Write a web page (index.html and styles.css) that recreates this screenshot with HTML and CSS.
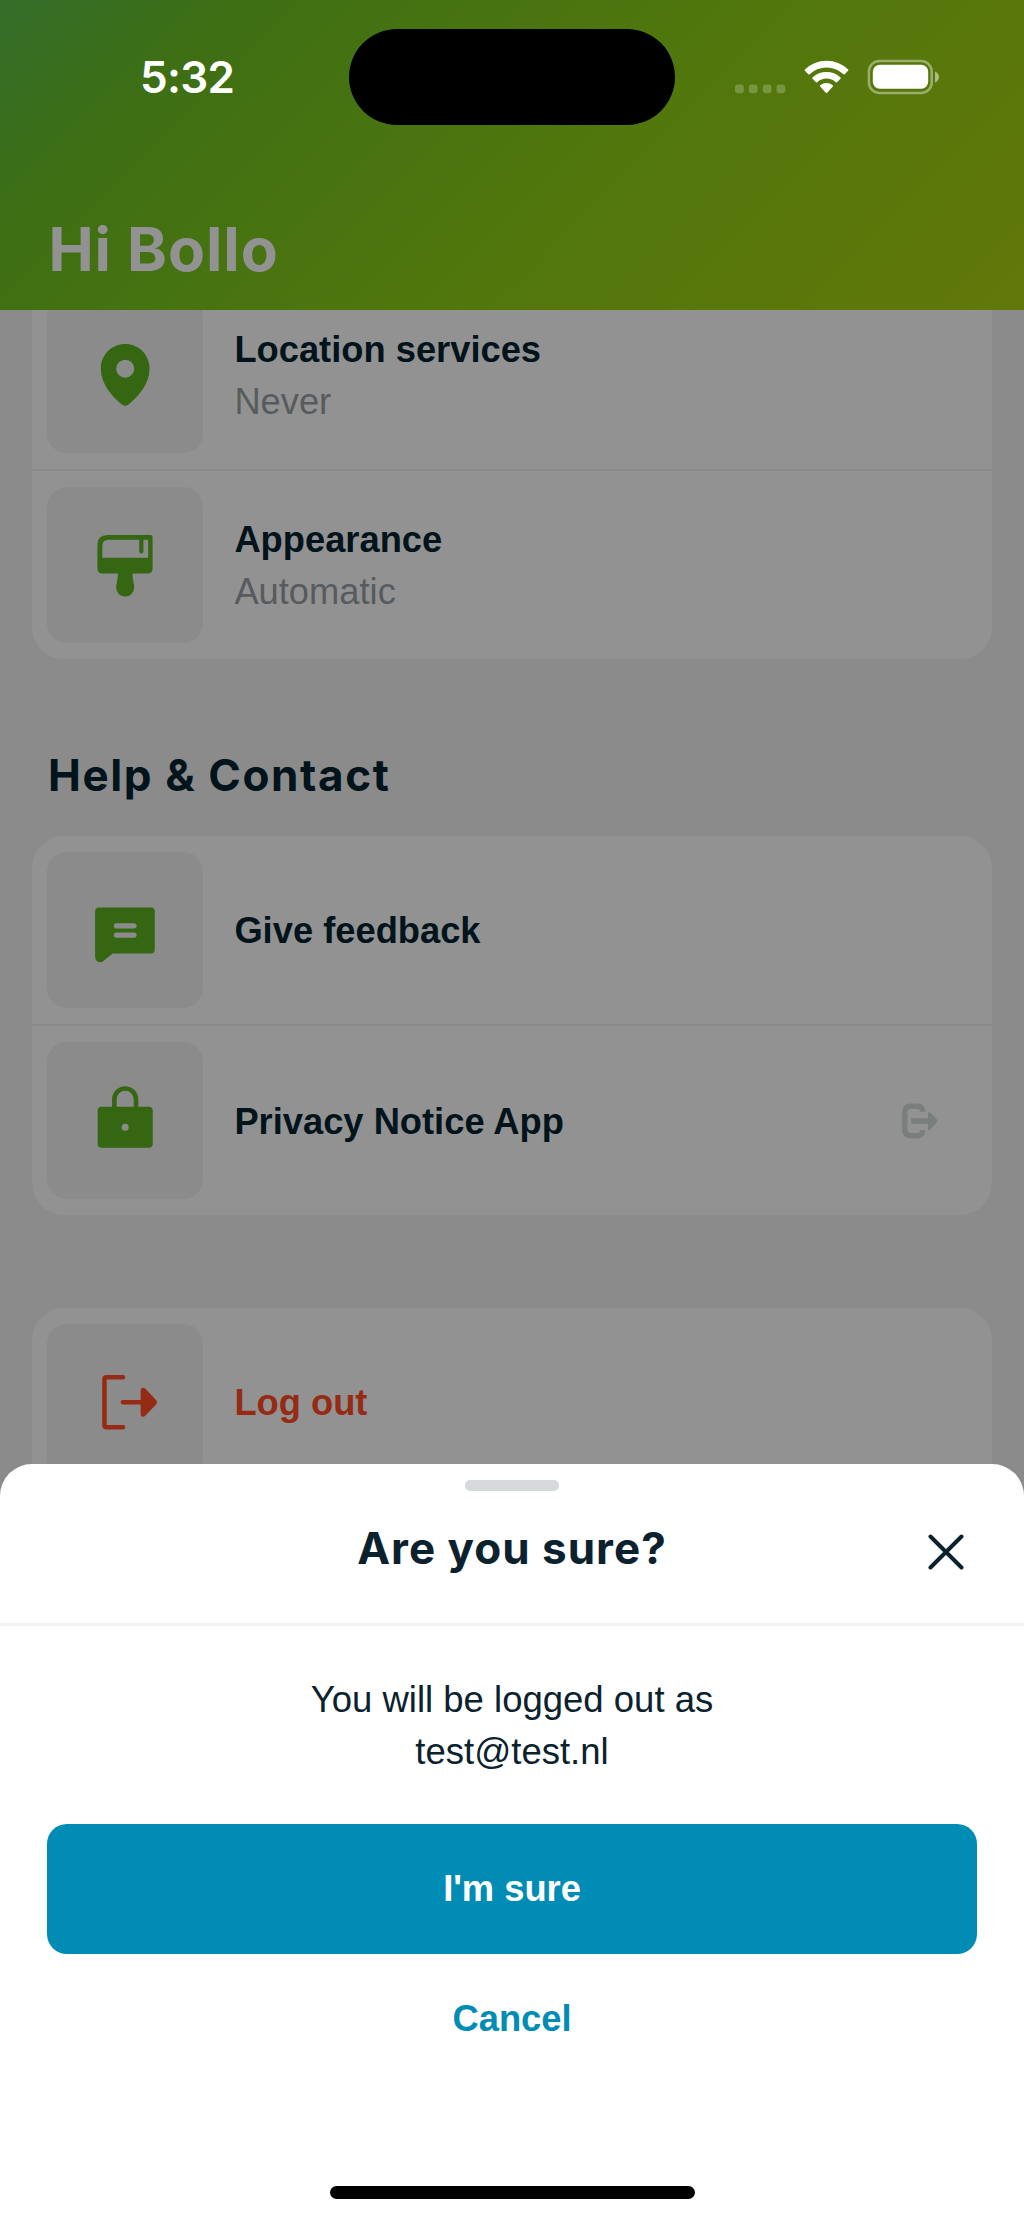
FILE: index.html
```html
<!DOCTYPE html>
<html lang="en">
<head>
<meta charset="utf-8">
<title>Profile</title>
<link rel="stylesheet" href="styles.css">
</head>
<body>
<div class="screen">
  <header class="header">
    <div class="status">
      <span class="time">5:32</span>
      <svg class="status-icons" viewBox="735 58 206 36" fill="#fff">
        <g opacity=".22">
          <rect x="735" y="83.5" width="8.8" height="8.8" rx="3"/>
          <rect x="748.8" y="83.5" width="8.8" height="8.8" rx="3"/>
          <rect x="762.7" y="83.5" width="8.8" height="8.8" rx="3"/>
          <rect x="776.5" y="83.5" width="8.8" height="8.8" rx="3"/>
        </g>
        <path d="M804.9 68.6a31 31 0 0 1 43.2 0q.5.6 0 1.200l-3.400 3.500q-.7.6-1.300 0a24.600 24.600 0 0 0-33.800 0q-.6.6-1.300 0l-3.400-3.500q-.5-.6 0-1.200z"/>
        <path d="M812.500 76.500a20.300 20.300 0 0 1 28 0q.6.6 0 1.200l-3.500 3.500q-.6.500-1.200 0a13.800 13.800 0 0 0-18.600 0q-.6.500-1.200 0l-3.500-3.500q-.6-.6 0-1.200z"/>
        <path d="M820.200 84.300a9.800 9.800 0 0 1 12.600 0q.7.600 0 1.300l-5.600 6.100q-.7.700-1.400 0l-5.600-6.100q-.7-.7 0-1.300z"/>
        <rect x="868.900" y="60" width="62.800" height="31.900" rx="10.500" fill="none" stroke="#fff" stroke-opacity=".4" stroke-width="2.500"/>
        <rect x="872.800" y="63.800" width="55.400" height="24" rx="7"/>
        <path opacity=".5" d="M935 70.500q4 2 4 5.500t-4 5.500z"/>
      </svg>
      <div class="island"></div>
    </div>
    <h1 class="greeting">Hi Bollo</h1>
  </header>

  <main class="content">
    <section class="card">
      <div class="row">
        <div class="tile">
          <svg viewBox="0 0 156 156"><path fill-rule="evenodd" d="M78 47C64.500 47 53.700 57.600 53.700 71.500C53.700 86 64 98.500 75 107.600Q78 109.600 81 107.600C92 98.500 102.300 86 102.300 71.500C102.300 57.600 91.500 47 78 47ZM78 62.500a9 9 0 1 1 0 18a9 9 0 0 1 0-18z"/></svg>
        </div>
        <div class="text"><span class="label">Location services</span><span class="value">Never</span></div>
      </div>
      <div class="row">
        <div class="tile">
          <svg viewBox="0 0 156 156"><path fill-rule="evenodd" d="M60.300 48H103.300Q105.300 48 105.300 50V81.300Q105.300 86.300 100.300 86.300H85.200Q85.300 91 86.500 96Q87 98 87 100.300A9 9 0 0 1 69 100.300Q69 98 69.500 96Q70.700 91 70.800 86.300H55.300Q50.300 86.300 50.300 81.300V58Q50.300 48 60.300 48ZM61.300 52.700Q55.200 52.700 55.200 59V70.600H100.900V52.700H96.200V64.300a2.100 2.100 0 0 1-4.200 0V52.700Z"/></svg>
        </div>
        <div class="text"><span class="label">Appearance</span><span class="value">Automatic</span></div>
      </div>
    </section>

    <h2 class="section-title">Help &amp; Contact</h2>
    <section class="card">
      <div class="row">
        <div class="tile">
          <svg viewBox="0 0 156 156"><path fill-rule="evenodd" d="M52 55.300H103.500Q107.500 55.300 107.500 59.300V97.300Q107.500 101.300 103.500 101.300H65.500L56 109Q53.500 110.800 50.500 109.300Q48 108 48 105V59.300Q48 55.300 52 55.300ZM69.200 71a2.600 2.600 0 0 0 0 5.200H86.800a2.600 2.600 0 0 0 0-5.200ZM69.200 80.300a2.600 2.600 0 0 0 0 5.200H86.800a2.600 2.600 0 0 0 0-5.200Z"/></svg>
        </div>
        <div class="text"><span class="label">Give feedback</span></div>
      </div>
      <div class="row">
        <div class="tile">
          <svg viewBox="0 0 156 156"><path d="M67.200 66V57.200a10.800 10.800 0 0 1 21.600 0V66" fill="none" stroke="currentColor" stroke-width="4.600"/><path fill-rule="evenodd" d="M54.600 64.500H101.400Q105.500 64.500 105.500 68.600V101.400Q105.500 105.500 101.400 105.500H54.600Q50.500 105.500 50.500 101.400V68.600Q50.500 64.500 54.600 64.500ZM78 81.500a3.500 3.500 0 1 0 0 7a3.500 3.500 0 0 0 0-7z"/></svg>
        </div>
        <div class="text"><span class="label">Privacy Notice App</span></div>
        <svg class="external" viewBox="902 1103 36 36"><path d="M923 1111.800Q922.500 1106.300 917 1106.300H910.800Q904.800 1106.300 904.800 1112.300V1129.800Q904.800 1135.700 910.800 1135.700H917Q922.500 1135.700 923 1130.200M911.200 1121H930" fill="none" stroke="currentColor" stroke-width="5.400"/><path d="M928 1113.500Q928 1111 930.300 1112.500L936.600 1119.200Q938 1121 936.600 1122.800L930.300 1129.500Q928 1131 928 1128.500Z" fill="currentColor"/></svg>
      </div>
    </section>

    <section class="card logout-card">
      <div class="row danger">
        <div class="tile">
          <svg viewBox="0 0 156 156"><path d="M75.800 53H59.300Q57.300 53 57.300 55V101Q57.300 103 59.300 103H75.800M75.800 78H95" fill="none" stroke="currentColor" stroke-width="4.500" stroke-linecap="round"/><path d="M93.400 66Q93.400 63.500 95.700 63.500Q97.200 63.500 98.200 64.700L109 76Q110.700 78 109 80L98.200 91.300Q97.200 92.500 95.700 92.500Q93.400 92.500 93.400 90Z"/></svg>
        </div>
        <div class="text"><span class="label">Log out</span></div>
      </div>
    </section>
  </main>

  <div class="sheet">
    <div class="handle"></div>
    <div class="sheet-head">
      <h2 class="sheet-title">Are you sure?</h2>
      <svg class="close" viewBox="0 0 36 36"><path d="M2.500 2.500L33.500 33.500M33.500 2.500L2.500 33.500" stroke="#0b222e" stroke-width="4" stroke-linecap="round"/></svg>
    </div>
    <div class="sheet-body">
      <p class="message">You will be logged out as<br>test@test.nl</p>
      <div class="confirm">I'm sure</div>
      <div class="cancel">Cancel</div>
    </div>
    <div class="home-indicator"></div>
  </div>
</div>
</body>
</html>
```
FILE: styles.css
```css
* { box-sizing: border-box; }

body {
  margin: 0;
  font-family: "Liberation Sans", Arial, sans-serif;
  font-size: 36.5px;
  line-height: 52px;
}

.screen {
  position: relative;
  width: 1024px;
  height: 2220px;
  overflow: hidden;
  background: #8b8b8b;
}

h1, h2, p { margin: 0; }

.header {
  position: relative;
  z-index: 1;
  height: 310px;
  background: linear-gradient(135deg, #346e2a 0%, #3e6f14 18%, #50770d 55%, #5e770a 90%, #62780a 100%);
}

.status {
  display: flex;
  justify-content: space-between;
  align-items: center;
  height: 153px;
  padding: 0 83px 0 140px;
}

.time {
  color: #fff;
  font: 600 44px/52px Inter, sans-serif;
  letter-spacing: -0.7px;
}

.status-icons { width: 206px; height: 36px; }

.island {
  position: absolute;
  left: 349px;
  top: 29px;
  width: 326px;
  height: 96px;
  border-radius: 48px;
  background: #000;
}

.greeting {
  padding: 60px 0 0 48.500px;
  color: #929292;
  font: 700 60.500px/73px Inter, sans-serif;
  letter-spacing: 0.900px;
}

.content { margin-top: -29.500px; padding: 0 32px; }

.card {
  border-radius: 32px;
  background: #929292;
  overflow: hidden;
}

.row {
  display: flex;
  align-items: center;
  gap: 31px;
  padding: 16px 54px 16px 15px;
}

.row + .row { border-top: 2px solid #8a8a8a; }

.tile {
  flex: none;
  width: 156.400px;
  height: 156.400px;
  border-radius: 20px;
  background: #8b8b8b;
  color: #356713;
}

.tile svg { display: block; width: 100%; height: 100%; fill: currentColor; }

.text { display: flex; flex: 1; flex-direction: column; padding-top: 2px; }

.label { color: #02141b; font-size: 36.300px; font-weight: 700; }

.value { color: #575b5d; font-size: 36.300px; }

.external { width: 36px; height: 36px; color: #7b7e7e; }

.danger .tile, .danger .label { color: #952b14; }

.section-title {
  padding: 89.200px 0 33.500px 16px;
  color: #02141b;
  font: 700 44px/54px Inter, sans-serif;
  letter-spacing: 1.600px;
}

.logout-card { margin-top: 93px; }

.sheet {
  position: absolute;
  left: 0;
  right: 0;
  bottom: 0;
  height: 756px;
  display: flex;
  flex-direction: column;
  align-items: center;
  border-radius: 32px 32px 0 0;
  background: #fff;
}

.handle {
  width: 94px;
  height: 10.500px;
  margin-top: 16px;
  border-radius: 5px;
  background: #d5dada;
}

.sheet-head {
  display: grid;
  grid-template-columns: 1fr auto 1fr;
  align-items: center;
  width: 100%;
  height: 135.500px;
  padding: 0 60px 10px;
  border-bottom: 3px solid #f1f2f2;
}

.sheet-title {
  grid-column: 2;
  padding: 0 0 7px;
  color: #0b222e;
  font: 700 44px/54px Inter, sans-serif;
  letter-spacing: 1px;
}

.close { width: 36px; height: 36px; justify-self: end; }

.sheet-body { width: 100%; padding: 48px 47px 0; text-align: center; }

.message { color: #0b222e; }

.confirm, .cancel { height: 130px; font-size: 36.300px; line-height: 130px; font-weight: 700; }

.confirm {
  margin-top: 46px;
  border-radius: 20px;
  background: #008cb5;
  color: #fff;
}

.cancel { color: #008cb5; }

.home-indicator {
  width: 365px;
  height: 13px;
  margin: auto 0 21px;
  border-radius: 7px;
  background: #000;
}
```
